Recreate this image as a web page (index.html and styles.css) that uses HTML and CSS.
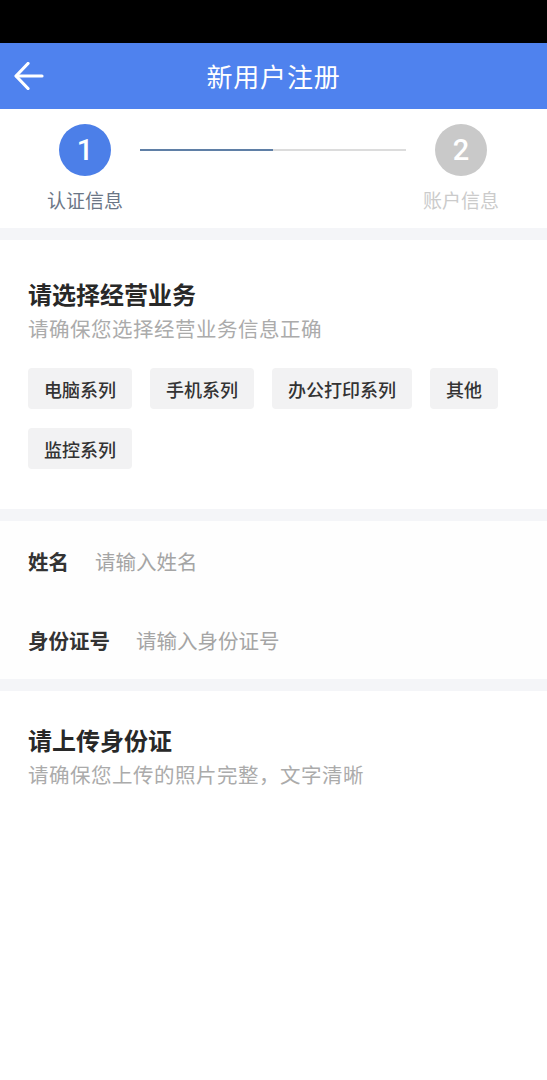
FILE: index.html
```html
<!DOCTYPE html>
<html lang="zh-CN">
<head>
<meta charset="utf-8">
<title>新用户注册</title>
<link rel="stylesheet" href="styles.css">
</head>
<body>
<div class="statusbar"></div>
<header class="navbar">
  <div class="back">
    <svg width="30" height="28" viewBox="0 0 30 28" fill="none" stroke="#fff" stroke-width="3.2" stroke-linecap="round" stroke-linejoin="round">
      <path d="M28 14H2.5"/>
      <path d="M14 1.5L2 14l12 12.5"/>
    </svg>
  </div>
  <h1 class="title">新用户注册</h1>
  <div></div>
</header>

<section class="stepper">
  <div class="step active">
    <div class="circle">1</div>
    <div class="step-label">认证信息</div>
  </div>
  <div class="track"><div class="track-fill"></div></div>
  <div class="step">
    <div class="circle">2</div>
    <div class="step-label">账户信息</div>
  </div>
</section>

<div class="band"></div>

<section class="block business">
  <h2 class="block-title">请选择经营业务</h2>
  <p class="block-sub">请确保您选择经营业务信息正确</p>
  <div class="chips">
    <span class="chip">电脑系列</span>
    <span class="chip">手机系列</span>
    <span class="chip">办公打印系列</span>
    <span class="chip">其他</span>
    <span class="chip">监控系列</span>
  </div>
</section>

<div class="band"></div>

<section class="fields">
  <div class="field">
    <span class="field-label">姓名</span>
    <span class="field-input">请输入姓名</span>
  </div>
  <div class="field">
    <span class="field-label">身份证号</span>
    <span class="field-input">请输入身份证号</span>
  </div>
</section>

<div class="band"></div>

<section class="block upload">
  <h2 class="block-title">请上传身份证</h2>
  <p class="block-sub">请确保您上传的照片完整，文字清晰</p>
</section>
</body>
</html>
```
FILE: styles.css
```css
* { box-sizing: border-box; }
html, body { margin: 0; padding: 0; background: #fff; }
body {
  font-family: "Noto Sans CJK SC", "Noto Sans", sans-serif;
  color: #333;
  width: 547px;
}
.statusbar { height: 43px; background: #000; }
.navbar {
  height: 66px;
  background: #4f82ee;
  display: grid;
  grid-template-columns: 70px 1fr 70px;
  align-items: center;
}
.back { padding-left: 14px; display: flex; align-items: center; }
.back svg { display: block; }
.title {
  margin: 0;
  text-align: center;
  color: #fff;
  font-size: 26px;
  font-weight: 400;
  line-height: 1;
  letter-spacing: 0.8px;
}
.stepper {
  height: 119px;
  display: flex;
  align-items: flex-start;
  padding: 15px 46px 0 45px;
}
.step {
  width: 80px;
  display: flex;
  flex-direction: column;
  align-items: center;
}
.circle {
  width: 52px; height: 52px;
  border-radius: 50%;
  background: #c9c9c9;
  color: #fff;
  font-family: Roboto, "Liberation Sans", sans-serif;
  font-weight: 500;
  font-size: 29px;
  display: flex; align-items: center; justify-content: center;
}
.step.active .circle { background: #4c7fe8; }
.step-label {
  margin-top: 12px;
  font-size: 19px;
  line-height: 24px;
  color: #cbcbcb;
  white-space: nowrap;
}
.step.active .step-label { color: #6b7686; }
.track {
  flex: 1;
  height: 2px;
  margin: 25px 15px 0;
  background: #dcdcdc;
}
.track-fill { width: 50%; height: 100%; background: #5f7fa6; }
.band { height: 12px; background: #f4f5f8; }
.block { padding: 39px 28px 40px; }
.block-title {
  margin: 0;
  font-size: 24px;
  line-height: 30px;
  font-weight: 700;
  color: #282828;
}
.block-sub {
  margin: 5px 0 0;
  font-size: 20.5px;
  line-height: 28px;
  color: #ababab;
  letter-spacing: 0.5px;
}
.chips {
  margin-top: 26px;
  display: flex;
  flex-wrap: wrap;
  column-gap: 18px;
  row-gap: 19px;
}
.chip {
  height: 41px;
  padding: 0 16px;
  display: flex; align-items: center;
  background: #f2f2f3;
  border-radius: 4px;
  font-size: 18px;
  font-weight: 500;
  color: #333;
}
.fields { background: #fefefe; }
.field {
  height: 79px;
  display: flex;
  align-items: center;
  padding: 0 28px;
  gap: 26px;
  font-size: 20.5px;
}
.field-label { font-weight: 700; color: #333; }
.field-input { color: #a5a5a5; }
.upload { padding-top: 34px; }
```
